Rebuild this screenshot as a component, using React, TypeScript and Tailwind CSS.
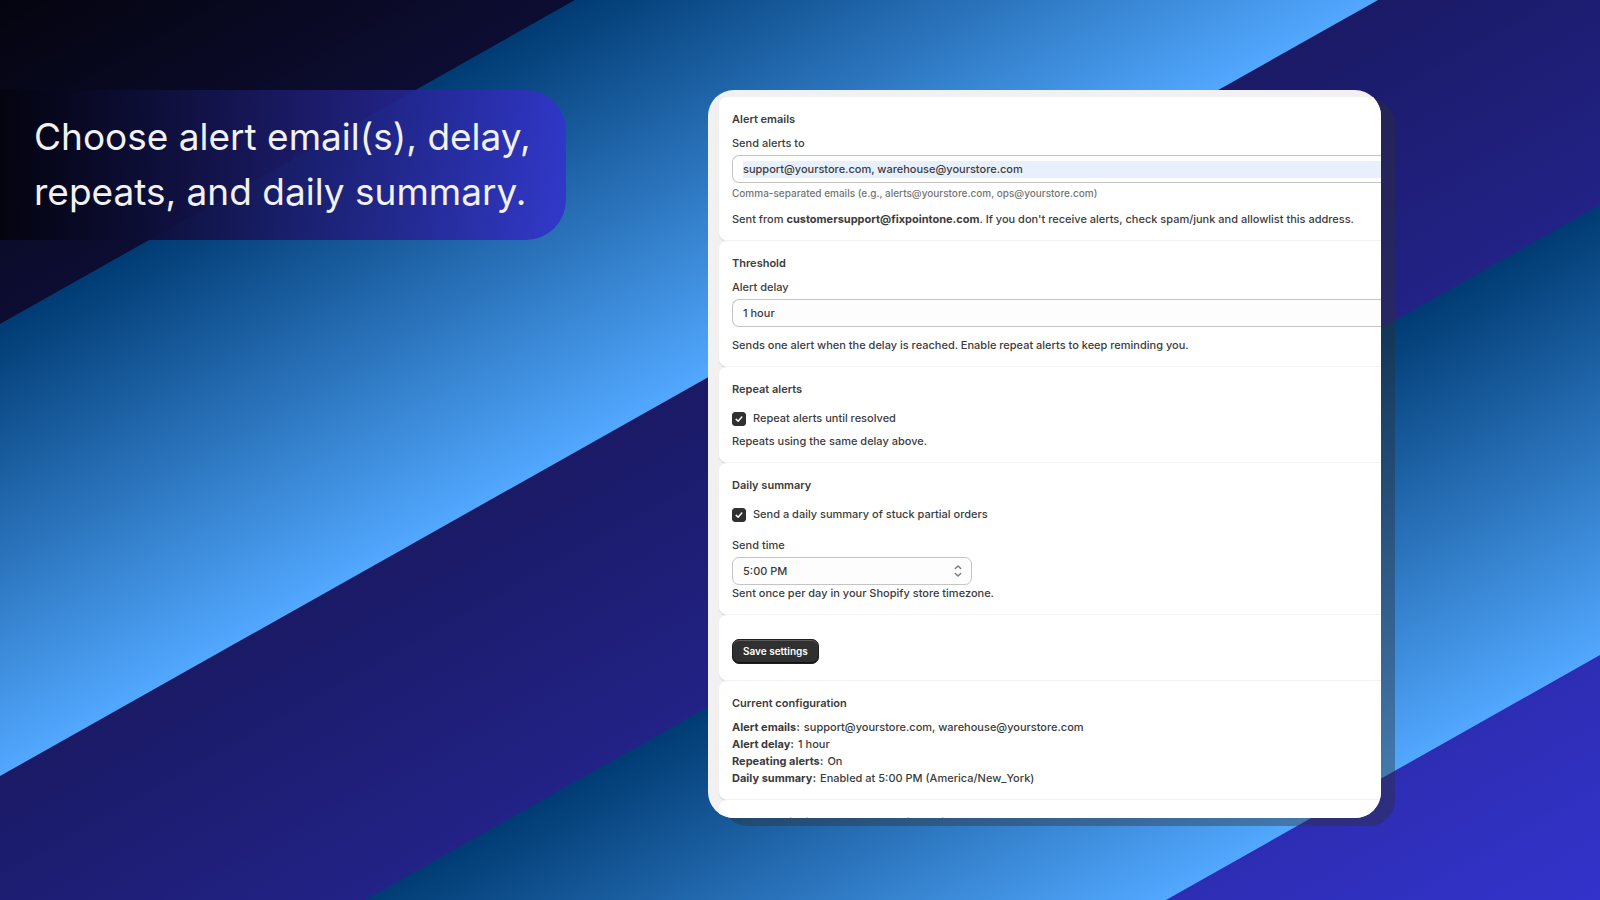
import type { ReactNode } from "react";

function Backdrop() {
  return (
    <svg
      className="absolute inset-0 h-full w-full"
      viewBox="0 0 1600 900"
      preserveAspectRatio="none"
      aria-hidden="true"
    >
      <defs>
        <linearGradient id="night" gradientUnits="userSpaceOnUse" x1="0" y1="0" x2="769" y2="1367">
          <stop offset="0" stopColor="#04040f" />
          <stop offset="0.18" stopColor="#0d0d33" />
          <stop offset="0.43" stopColor="#1a1a66" />
          <stop offset="1" stopColor="#3333cc" />
        </linearGradient>
        <linearGradient id="skyA" gradientUnits="userSpaceOnUse" x1="138" y1="246" x2="331" y2="589">
          <stop offset="0" stopColor="#003b73" />
          <stop offset="1" stopColor="#52a8ff" />
        </linearGradient>
        <linearGradient id="skyB" gradientUnits="userSpaceOnUse" x1="472" y1="839" x2="664" y2="1181">
          <stop offset="0" stopColor="#003b73" />
          <stop offset="1" stopColor="#52a8ff" />
        </linearGradient>
      </defs>
      <rect width="1600" height="900" fill="url(#night)" />
      <polygon points="575,0 1378,0 0,776 0,324" fill="url(#skyA)" />
      <polygon points="1600,205 1600,655 1166,900 365,900" fill="url(#skyB)" />
    </svg>
  );
}

function Section({ title, children }: { title: string; children: ReactNode }) {
  return (
    <section className="rounded-l-lg border-b border-[#f3f3f3] bg-white pt-[14px] pb-3 pl-[13px] shadow-[0_1px_1px_rgba(0,0,0,0.12)]">
      <h2 className="font-semibold">{title}</h2>
      {children}
    </section>
  );
}

function Check({ id, label }: { id: string; label: string }) {
  return (
    <div className="flex items-center gap-[7px] pt-3 pb-px">
      <span className="relative flex h-[14px] w-[14px]">
        <input
          id={id}
          type="checkbox"
          defaultChecked
          className="peer h-[14px] w-[14px] appearance-none rounded-[3px] border border-[#303030] bg-white checked:bg-[#303030]"
        />
        <svg
          viewBox="0 0 14 14"
          className="pointer-events-none absolute inset-0 hidden h-[14px] w-[14px] peer-checked:block"
          fill="none"
          stroke="#ffffff"
          strokeWidth="1.5"
          strokeLinecap="round"
          strokeLinejoin="round"
          aria-hidden="true"
        >
          <path d="M4.2 7.4 6.1 9.2 9.8 5" />
        </svg>
      </span>
      <label htmlFor={id}>{label}</label>
    </div>
  );
}

const config = [
  ["Alert emails:", "support@yourstore.com, warehouse@yourstore.com"],
  ["Alert delay:", "1 hour"],
  ["Repeating alerts:", "On"],
  ["Daily summary:", "Enabled at 5:00 PM (America/New_York)"],
];

export default function App() {
  return (
    <div className="relative min-h-screen overflow-hidden font-['Inter',sans-serif]">
      <Backdrop />
      <main className="relative grid grid-cols-[566fr_142fr_673fr_219fr] items-start pt-[90px] pb-[81px]">
        <div className="rounded-r-[40px] bg-linear-to-r from-[#040410] via-[#1a1a66]/90 to-[#3333cc]/90 pt-[19px] pb-[21px] pl-[34px]">
          <h1 className="text-[37px] leading-[55px] text-[#f1f1f1]">
            Choose alert email(s), delay,
            <br />
            repeats, and daily summary.
          </h1>
        </div>

        <div className="col-start-3 overflow-hidden rounded-[26px] bg-[#f1f1f1] pt-[7px] pl-[11px] text-[11px] leading-[17px] font-[450] text-[#3c3c3c] shadow-[14px_8px_0_rgba(48,48,48,0.4)]">
          <Section title="Alert emails">
            <label htmlFor="emails" className="mt-[7px] block">
              Send alerts to
            </label>
            <div className="mt-[3px] flex h-7 items-center rounded-l-[7px] border border-r-0 border-[#c4c4c4] bg-white pl-[10px]">
              <input
                id="emails"
                type="text"
                defaultValue="support@yourstore.com, warehouse@yourstore.com"
                className="h-[17px] w-full bg-[#e8f0fe] outline-none"
              />
            </div>
            <p className="mt-[2px] text-[10px] font-medium text-[#757575]">
              Comma-separated emails (e.g., alerts@yourstore.com, ops@yourstore.com)
            </p>
            <p className="mt-[9px] whitespace-nowrap">
              Sent from <strong className="font-bold">customersupport@fixpointone.com</strong>. If you don't
              receive alerts, check spam/junk and allowlist this address.
            </p>
          </Section>

          <Section title="Threshold">
            <label htmlFor="delay" className="mt-[7px] block">
              Alert delay
            </label>
            <select
              id="delay"
              className="mt-[3px] block h-7 w-full appearance-none rounded-l-[7px] border border-r-0 border-[#c4c4c4] bg-[#fdfdfd] pl-[10px]"
            >
              <option>1 hour</option>
            </select>
            <p className="mt-[10px]">
              Sends one alert when the delay is reached. Enable repeat alerts to keep reminding you.
            </p>
          </Section>

          <Section title="Repeat alerts">
            <Check id="repeat" label="Repeat alerts until resolved" />
            <p className="mt-[5px]">Repeats using the same delay above.</p>
          </Section>

          <Section title="Daily summary">
            <Check id="daily" label="Send a daily summary of stuck partial orders" />
            <label htmlFor="time" className="mt-[13px] block">
              Send time
            </label>
            <div className="relative mt-[3px] w-60">
              <select
                id="time"
                className="block h-7 w-full appearance-none rounded-[7px] border border-[#c4c4c4] bg-[#fdfdfd] pl-[10px]"
              >
                <option>5:00 PM</option>
              </select>
              <svg
                viewBox="0 0 10 14"
                className="pointer-events-none absolute top-[7px] right-[9px] h-[14px] w-[10px]"
                fill="none"
                stroke="#7a7a7a"
                strokeWidth="1.4"
                strokeLinecap="round"
                strokeLinejoin="round"
                aria-hidden="true"
              >
                <path d="M2.3 4.6 5 2 7.7 4.6M2.3 9.4 5 12 7.7 9.4" />
              </svg>
            </div>
            <p>Sent once per day in your Shopify store timezone.</p>
          </Section>

          <section className="rounded-l-lg border-b border-[#f3f3f3] bg-white pt-6 pb-4 pl-[13px] shadow-[0_1px_1px_rgba(0,0,0,0.12)]">
            <button
              type="button"
              className="block h-[25px] rounded-[7px] border border-[#1f1f1f] bg-[#303030] px-[10px] text-[10px] leading-[21px] font-semibold text-white shadow-[inset_0_1px_0_#5c5c5c,inset_0_-1px_0_#111111]"
            >
              Save settings
            </button>
          </section>

          <Section title="Current configuration">
            <dl className="mt-[7px]">
              {config.map(([name, value]) => (
                <div key={name} className="flex gap-1">
                  <dt className="font-bold">{name}</dt>
                  <dd>{value}</dd>
                </div>
              ))}
            </dl>
          </Section>

          <footer className="h-[18px] overflow-hidden rounded-tl-lg bg-white pt-[14px] pl-[13px] text-[#616161]">
            © 2026 Shipping Agent 501c Social Fulfillment, Inc.
          </footer>
        </div>
      </main>
    </div>
  );
}
